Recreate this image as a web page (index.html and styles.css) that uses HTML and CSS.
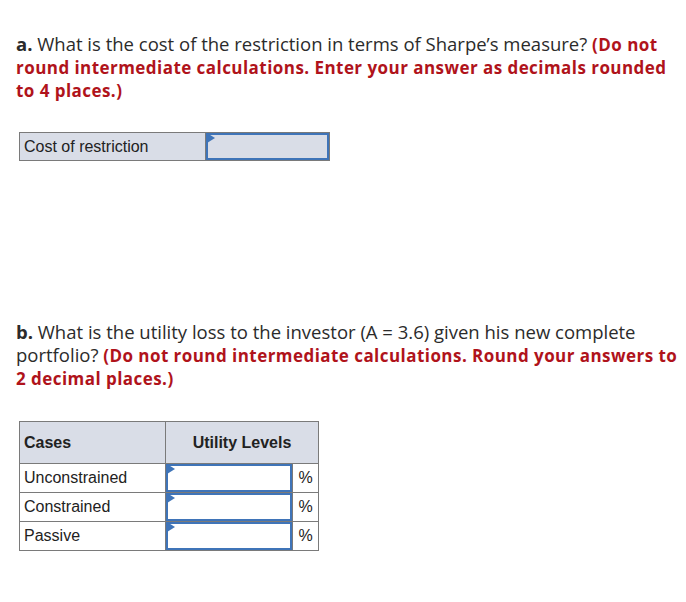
FILE: index.html
```html
<!DOCTYPE html>
<html>
<head>
<meta charset="utf-8">
<link rel="stylesheet" href="styles.css">
</head>
<body>
<div class="page">
  <p class="q">
    <b class="lbl">a.</b> What is the cost of the restriction in terms of Sharpe’s measure? <b class="note">(Do not<br>round intermediate calculations. Enter your answer as decimals rounded<br>to 4 places.)</b>
  </p>
  <table class="t1">
    <tr>
      <td class="label">Cost of restriction</td>
      <td class="inp"><div class="box shaded"><span class="tri"></span></div></td>
    </tr>
  </table>

  <p class="q qb">
    <b class="lbl">b.</b> What is the utility loss to the investor (A = 3.6) given his new complete<br>portfolio? <b class="note">(Do not round intermediate calculations. Round your answers to<br>2 decimal places.)</b>
  </p>
  <table class="t2">
    <tr class="head">
      <th class="c1">Cases</th>
      <th class="c2" colspan="2">Utility Levels</th>
    </tr>
    <tr>
      <td class="label">Unconstrained</td>
      <td class="inp"><div class="box"><span class="tri"></span></div></td>
      <td class="pct">%</td>
    </tr>
    <tr>
      <td class="label">Constrained</td>
      <td class="inp"><div class="box"><span class="tri"></span></div></td>
      <td class="pct">%</td>
    </tr>
    <tr>
      <td class="label">Passive</td>
      <td class="inp"><div class="box"><span class="tri"></span></div></td>
      <td class="pct">%</td>
    </tr>
  </table>
</div>
</body>
</html>
```

FILE: styles.css
```css
html, body {
  margin: 0;
  padding: 0;
  background: #ffffff;
}
.page {
  padding: 32px 0 0 16px;
  width: 670px;
}
.q {
  margin: 0;
  font-family: "Open Sans", Lato, sans-serif;
  font-size: 18.5px;
  line-height: 23px;
  color: #2b2b2b;
  white-space: nowrap;
}
.lbl {
  font-weight: 700;
  color: #2b2b2b;
}
.note {
  font-weight: 700;
  font-size: 17px;
  line-height: 18px;
  letter-spacing: 0.45px;
  color: #b0131b;
}
.qb {
  margin-top: 159px;
}
table {
  border-collapse: collapse;
  font-family: "Liberation Sans", Arial, sans-serif;
  font-size: 16px;
  color: #222;
}
td, th {
  border: 1px solid #7a7a7a;
  padding: 0;
}
.t1 {
  margin: 31px 0 0 3px;
}
.t1 td {
  height: 27px;
  background: #d9dde7;
}
.t1 .label {
  width: 181px;
  padding-left: 4px;
}
.t1 .inp {
  width: 123px;
}
.box {
  position: relative;
  box-sizing: border-box;
  height: 100%;
  min-height: 27px;
  border: 2px solid #3f74b8;
  background: #ffffff;
}
.box.shaded {
  background: #d9dde7;
}
.tri {
  position: absolute;
  left: 0;
  top: 0;
  width: 0;
  height: 0;
  border-top: 5px solid transparent;
  border-bottom: 5px solid transparent;
  border-left: 8px solid #3f74b8;
  transform: translate(-1px, -2px);
}
.t2 {
  margin: 32px 0 0 3px;
}
.t2 .head th {
  height: 41px;
  background: #d9dde7;
  font-weight: 700;
}
.t2 .c1 {
  text-align: left;
  padding-left: 4px;
  width: 141px;
}
.t2 .c2 {
  text-align: center;
}
.t2 td {
  height: 28px;
}
.t2 .label {
  padding-left: 4px;
  width: 141px;
}
.t2 .inp {
  width: 126px;
}
.t2 .inp .box {
  min-height: 28px;
}
.t2 .pct {
  width: 25px;
  text-align: center;
}
```
